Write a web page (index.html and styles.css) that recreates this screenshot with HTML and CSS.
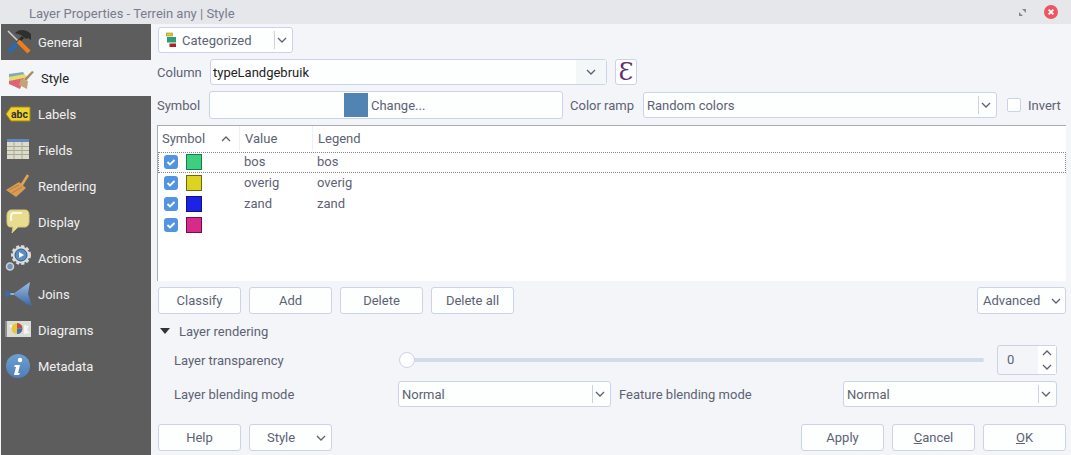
FILE: index.html
```html
<!DOCTYPE html>
<html>
<head>
    <title>Layer Properties - Terrein any | Style</title>
    <link rel="stylesheet" href="styles.css">
</head>
<body>
<div class="window">
    <div class="titlebar">
        <span class="title">Layer Properties - Terrein any | Style</span>
        <svg class="restore" width="7" height="7" viewBox="0 0 7 7"><path d="M3 0h4v4zM0 3l4 4H0z" fill="#8a8a8a"/></svg>
        <svg class="close" width="14" height="14" viewBox="0 0 14 14"><circle cx="7" cy="7" r="7" fill="#ee5560"/><path d="M4.600 4.600l4.800 4.800M9.400 4.600L4.600 9.400" stroke="#fff" stroke-width="1.800"/></svg>
    </div>
    <div class="content">
        <div class="sidebar">
            <div class="navitem">
                <svg class="navicon" width="26" height="26" viewBox="0 0 26 26"><path d="M2 2l11 11" stroke="#cfcfcf" stroke-width="1.600"/><path d="M17 8l-6 6" stroke="#2b2b2b" stroke-width="3"/><path d="M9 4c4-4 11-4 16 1v6l-3-2-2 1-5-4c-2-1-4-1-6-2z" fill="#2f2f2f"/><path d="M3 23l8-9" stroke="#2a6bb0" stroke-width="4.400"/><path d="M12 12l11 11" stroke="#f07c1c" stroke-width="4.400"/></svg>
                General
            </div>
            <div class="navitem active">
                <svg class="navicon" width="26" height="26" viewBox="0 0 26 26"><path d="M0 9l14-2 3 5-17 3z" fill="#7fa8c8"/><path d="M0 12l16-3 1 6-17 3z" fill="#e6dd66"/><path d="M0 16l15-3-4 11-11-5z" fill="#dc6476"/><path d="M17 16l8-9-2-1-8 8z" fill="#a58a5e"/><path d="M12 14l7 2-1 8-8-4z" fill="#c2a477"/></svg>
                Style
            </div>
            <div class="navitem">
                <svg class="navicon" width="26" height="26" viewBox="0 0 26 26"><path d="M5 6h19v14H5l-5-7z" fill="#f1d32e" stroke="#a68a12"/><text x="5" y="16.500" class="abc">abc</text></svg>
                Labels
            </div>
            <div class="navitem">
                <svg class="navicon" width="26" height="26" viewBox="0 0 26 26"><rect x="1" y="2" width="22" height="20" fill="#dcdccd"/><rect x="1" y="2" width="22" height="3" fill="#6488bb"/><path d="M1 9.500h22M1 13.500h22M1 17.500h22M8 5v17M16 5v17" stroke="#a9a994"/></svg>
                Fields
            </div>
            <div class="navitem">
                <svg class="navicon" width="26" height="26" viewBox="0 0 26 26"><path d="M15 13L22 2" stroke="#e3a54c" stroke-width="2.600"/><path d="M0 17l13-8 7 6-10 9z" fill="#d99c55"/><path d="M3 17l10-5M6 20l10-6" stroke="#b9803c"/></svg>
                Rendering
            </div>
            <div class="navitem">
                <svg class="navicon" width="26" height="26" viewBox="0 0 26 26"><path d="M5 1h14c3 0 4 2 4 5v7c0 3-2 5-4 5h-7l-6 6 1-6H5c-3 0-4-2-4-5V6c0-3 2-5 4-5z" fill="#e8dc8e" stroke="#d6c878"/><path d="M5 12V7c0-2 1-3 3-3h8" stroke="#fbf8e2" stroke-width="2" fill="none"/></svg>
                Display
            </div>
            <div class="navitem">
                <svg class="navicon" width="26" height="26" viewBox="0 0 26 26"><circle cx="15" cy="10" r="8.500" fill="#dcdcdc" stroke="#dcdcdc" stroke-width="3" stroke-dasharray="3 2"/><circle cx="15" cy="10" r="6" fill="#5c8cc4" stroke="#2f5a90"/><path d="M13 7l5 3-5 3z" fill="#fff"/><circle cx="4" cy="21.500" r="3.500" fill="#6f93bf" stroke="#cfcfcf" stroke-width="1.600"/></svg>
                Actions
            </div>
            <div class="navitem">
                <svg class="navicon" width="26" height="26" viewBox="0 0 26 26"><defs><linearGradient id="joinfill" x1="0" y1="0" x2="0" y2="1"><stop offset="0" stop-color="#9dbde2"/><stop offset="1" stop-color="#3a68a6"/></linearGradient></defs><path d="M7 13L24 1l-2 12 4 12-4-1z" fill="url(#joinfill)"/><path d="M2 13h6" stroke="#8fb0d6" stroke-width="2"/><circle cx="1.500" cy="13" r="3" fill="#3f69a0"/></svg>
                Joins
            </div>
            <div class="navitem">
                <svg class="navicon" width="26" height="26" viewBox="0 0 26 26"><rect x="0" y="4" width="25" height="16" fill="#dcdcd6"/><path d="M0 4v16" stroke="#8f8f8f" stroke-width="2"/><path d="M18 8l5 1-2 4 3 3-6 1zM3 8l4 0-2 4z" fill="#f4f4f2"/><circle cx="11" cy="11.500" r="5.500" fill="#e6c93a"/><path d="M11 11.500V6a5.500 5.500 0 0 1 5.500 5.500z" fill="#c74d4d"/><path d="M11 11.500h5.500A5.500 5.500 0 0 1 11 17z" fill="#3f6fb0"/></svg>
                Diagrams
            </div>
            <div class="navitem">
                <svg class="navicon" width="26" height="26" viewBox="0 0 26 26"><defs><linearGradient id="infofill" x1="0" y1="0" x2="0" y2="1"><stop offset="0" stop-color="#6f9ed2"/><stop offset="1" stop-color="#4f7fb8"/></linearGradient></defs><circle cx="12" cy="13" r="12" fill="url(#infofill)"/><circle cx="14" cy="7" r="2.200" fill="#fff"/><path d="M9 12h5l-2 8h2l-1 2H8l2-8H8z" fill="#fff"/></svg>
                Metadata
            </div>
        </div>
        <div class="main">
            <div class="row renderer-row">
                <div class="combo renderer">
                    <svg width="16" height="16" viewBox="0 0 16 16"><rect x="0.500" y="1" width="6" height="3" fill="#e3c92e" stroke="#8a7a20" stroke-width="0.500"/><rect x="1" y="5" width="9" height="5.500" fill="#2e9e7a"/><rect x="3.500" y="11.500" width="6.500" height="3.500" fill="#b02020"/></svg>
                    <span class="combo-text">Categorized</span>
                    <span class="combo-arrow split"><svg class="chev" width="10" height="6" viewBox="0 0 10 6"><path d="M1 1l4 4 4-4"/></svg></span>
                </div>
            </div>
            <div class="row column-row">
                <label class="lbl-column">Column</label>
                <div class="combo column-combo">
                    <span class="combo-text dark">typeLandgebruik</span>
                    <span class="combo-arrow wide"><svg class="chev" width="10" height="6" viewBox="0 0 10 6"><path d="M1 1l4 4 4-4"/></svg></span>
                </div>
                <div class="btn epsilon">&#400;</div>
            </div>
            <div class="row symbol-row">
                <label class="lbl-column">Symbol</label>
                <div class="symbol-btn"><span class="swatch-big"></span><span>Change...</span></div>
                <label class="lbl-ramp">Color ramp</label>
                <div class="combo ramp">
                    <span class="combo-text">Random colors</span>
                    <span class="combo-arrow split"><svg class="chev" width="10" height="6" viewBox="0 0 10 6"><path d="M1 1l4 4 4-4"/></svg></span>
                </div>
                <span class="checkbox"></span>
                <span class="invert">Invert</span>
            </div>
            <div class="tree">
                <div class="tree-head">
                    <span class="col-symbol">Symbol <svg class="chev sort" width="10" height="6" viewBox="0 0 10 6"><path d="M1 5l4-4 4 4"/></svg></span>
                    <span class="col-value">Value</span>
                    <span class="col-legend">Legend</span>
                </div>
                <div class="tree-row current">
                    <span class="check"><svg width="14" height="14" viewBox="0 0 14 14"><path d="M3.500 7l2.500 2.500 4.500-4.500"/></svg></span>
                    <span class="sw green"></span>
                    <span class="cell-value">bos</span><span class="cell-legend">bos</span>
                </div>
                <div class="tree-row">
                    <span class="check"><svg width="14" height="14" viewBox="0 0 14 14"><path d="M3.500 7l2.500 2.500 4.500-4.500"/></svg></span>
                    <span class="sw yellow"></span>
                    <span class="cell-value">overig</span><span class="cell-legend">overig</span>
                </div>
                <div class="tree-row">
                    <span class="check"><svg width="14" height="14" viewBox="0 0 14 14"><path d="M3.500 7l2.500 2.500 4.500-4.500"/></svg></span>
                    <span class="sw blue"></span>
                    <span class="cell-value">zand</span><span class="cell-legend">zand</span>
                </div>
                <div class="tree-row">
                    <span class="check"><svg width="14" height="14" viewBox="0 0 14 14"><path d="M3.500 7l2.500 2.500 4.500-4.500"/></svg></span>
                    <span class="sw pink"></span>
                </div>
            </div>
            <div class="row actions-row">
                <div class="btn">Classify</div>
                <div class="btn">Add</div>
                <div class="btn">Delete</div>
                <div class="btn">Delete all</div>
                <div class="btn advanced">Advanced <svg class="chev" width="10" height="6" viewBox="0 0 10 6"><path d="M1 1l4 4 4-4"/></svg></div>
            </div>
            <div class="section-head"><span class="tri"></span>Layer rendering</div>
            <div class="row transparency-row">
                <label class="lbl-render">Layer transparency</label>
                <div class="slider"><span class="slider-handle"></span></div>
                <div class="spin">
                    <span class="spin-value">0</span>
                    <span class="spin-arrows">
                        <svg class="chev" width="10" height="6" viewBox="0 0 10 6"><path d="M1 5l4-4 4 4"/></svg>
                        <svg class="chev" width="10" height="6" viewBox="0 0 10 6"><path d="M1 1l4 4 4-4"/></svg>
                    </span>
                </div>
            </div>
            <div class="row blending-row">
                <label class="lbl-render">Layer blending mode</label>
                <div class="combo blend-layer">
                    <span class="combo-text">Normal</span>
                    <span class="combo-arrow split"><svg class="chev" width="10" height="6" viewBox="0 0 10 6"><path d="M1 1l4 4 4-4"/></svg></span>
                </div>
                <label class="lbl-feature">Feature blending mode</label>
                <div class="combo blend-feature">
                    <span class="combo-text">Normal</span>
                    <span class="combo-arrow split"><svg class="chev" width="10" height="6" viewBox="0 0 10 6"><path d="M1 1l4 4 4-4"/></svg></span>
                </div>
            </div>
            <div class="row bottom-row">
                <div class="btn">Help</div>
                <div class="btn style-btn">Style <svg class="chev" width="10" height="6" viewBox="0 0 10 6"><path d="M1 1l4 4 4-4"/></svg></div>
                <div class="btn push">Apply</div>
                <div class="btn"><span><u>C</u>ancel</span></div>
                <div class="btn"><span><u>O</u>K</span></div>
            </div>
        </div>
    </div>
</div>
</body>
</html>
```
FILE: styles.css
```css
html, body {
    margin: 0;
    padding: 0;
}

body {
    font-family: Roboto, "Liberation Sans", sans-serif;
    font-size: 13px;
    color: #5c6274;
    background-color: #f4f5f8;
}

.window {
    width: 1071px;
    height: 455px;
    overflow: hidden;
    display: flex;
    flex-direction: column;
}

.titlebar {
    height: 24px;
    flex: none;
    background-color: #e6e7eb;
    display: flex;
    align-items: center;
    padding-left: 29px;
    color: #777c8e;
}

.title {
    flex: 1;
    padding-top: 2px;
}

.restore {
    margin-right: 18px;
}

.close {
    margin-right: 13px;
}

.content {
    flex: 1;
    display: flex;
}

.sidebar {
    width: 150px;
    margin-left: 1px;
    background-color: #5d5d5d;
    color: #f0f0f0;
}

.navitem {
    height: 36px;
    display: flex;
    align-items: center;
    padding-left: 5px;
}

.navicon {
    margin-right: 6px;
    flex: none;
    overflow: visible;
}

.navitem.active {
    background-color: #f4f5f8;
    color: #222222;
}

.navitem.active .navicon {
    margin-left: 3px;
}

.abc {
    font-size: 10.500px;
    font-weight: 700;
    fill: #333333;
}

.main {
    flex: 1;
    min-width: 0;
    padding: 3px 5px 0 6px;
}

.row {
    display: flex;
    align-items: center;
}

.chev {
    fill: none;
    stroke: #5c6274;
    stroke-width: 1.300;
}

.combo,
.btn,
.symbol-btn,
.spin {
    box-sizing: border-box;
    background-color: #fdfefe;
    border: 1px solid #cbd3e6;
    border-radius: 3px;
}

.combo {
    display: flex;
    align-items: center;
    height: 26px;
    padding-left: 3px;
}

.combo-text {
    flex: 1;
}

.combo-text.dark {
    color: #222222;
}

.combo-arrow {
    width: 18px;
    height: 18px;
    display: flex;
    align-items: center;
    justify-content: center;
    box-sizing: border-box;
}

.combo-arrow.split {
    border-left: 1px solid #cbd3e6;
    padding-right: 4px;
}

.combo-arrow.wide {
    width: 30px;
    height: 24px;
    background-color: #f4f7f7;
}

.renderer {
    width: 135px;
    margin-left: 1px;
    padding-left: 7px;
}

.column-row {
    margin-top: 6px;
}

.lbl-column {
    width: 52px;
    flex: none;
}

.column-combo {
    width: 397px;
    margin-left: 1px;
    padding-left: 2px;
}

.btn.epsilon {
    width: 22px;
    height: 26px;
    margin-left: 8px;
    font-family: "DejaVu Serif", serif;
    font-size: 24px;
    color: #5f2f70;
}

.symbol-row {
    margin-top: 6px;
    height: 28px;
}

.symbol-btn {
    width: 354px;
    height: 28px;
    display: flex;
    align-items: center;
    padding-left: 134px;
    gap: 3px;
}

.swatch-big {
    width: 24px;
    height: 24px;
    background-color: #5183b3;
}

.lbl-ramp {
    margin-left: 7px;
    width: 73px;
    flex: none;
}

.ramp {
    width: 354px;
}

.checkbox {
    box-sizing: border-box;
    width: 14px;
    height: 14px;
    margin-left: 10px;
    border: 1px solid #cbd3e6;
    border-radius: 2px;
    background-color: #ffffff;
}

.invert {
    margin-left: 7px;
}

.tree {
    box-sizing: border-box;
    width: 909px;
    height: 156px;
    margin-top: 6px;
    background-color: #ffffff;
    border-top: 1px solid #a9abb2;
    border-left: 1px solid #a9abb2;
}

.tree-head {
    height: 25px;
    margin-bottom: 1px;
    display: flex;
    align-items: center;
}

.col-symbol {
    width: 82px;
    padding-left: 4px;
    box-sizing: border-box;
    border-right: 1px solid #eef0f4;
    line-height: 25px;
    display: flex;
    align-items: center;
    justify-content: space-between;
    padding-right: 8px;
}

.col-value {
    width: 73px;
    box-sizing: border-box;
    padding-left: 5px;
    border-right: 1px solid #eef0f4;
    line-height: 25px;
}

.col-legend {
    padding-left: 5px;
}

.tree-row {
    height: 21px;
    box-sizing: border-box;
    display: flex;
    align-items: center;
    padding-left: 6px;
    padding-bottom: 1px;
}

.tree-row.current {
    border: 1px dotted #888888;
    padding-left: 5px;
    padding-bottom: 1px;
}

.check {
    width: 14px;
    height: 14px;
    background-color: #5294e2;
    border-radius: 3px;
    display: flex;
}

.check path {
    fill: none;
    stroke: #ffffff;
    stroke-width: 1.800;
}

.sw {
    box-sizing: border-box;
    width: 16px;
    height: 16px;
    margin-left: 8px;
    border: 1px solid;
}

.green {
    background-color: #3dcf80;
    border-color: #1f7a4a;
}

.yellow {
    background-color: #ddd321;
    border-color: #6d6810;
}

.blue {
    background-color: #1c22e6;
    border-color: #101478;
}

.pink {
    background-color: #d82a8a;
    border-color: #701045;
}

.cell-value {
    margin-left: 42px;
    width: 73px;
    padding-bottom: 2px;
}

.cell-legend {
    display: block;
    padding-bottom: 2px;
}

.actions-row {
    margin-top: 6px;
    gap: 8px;
    margin-left: 1px;
}

.btn {
    width: 83px;
    height: 27px;
    display: flex;
    align-items: center;
    justify-content: center;
    flex: none;
}

.btn.advanced {
    width: 89px;
    margin-left: auto;
    justify-content: space-between;
    padding: 0 4px 0 5px;
}

.section-head {
    display: flex;
    align-items: center;
    margin-top: 9px;
    margin-left: 3px;
    height: 16px;
}

.tri {
    width: 0;
    height: 0;
    border-left: 5.500px solid transparent;
    border-right: 5.500px solid transparent;
    border-top: 6px solid #333333;
    margin-right: 9px;
}

.transparency-row {
    margin-top: 6px;
    height: 30px;
    width: 900px;
}

.lbl-render {
    width: 241px;
    padding-left: 17px;
    box-sizing: border-box;
    flex: none;
}

.slider {
    position: relative;
    width: 585px;
    height: 4px;
    margin-left: 1px;
    background-color: #d3dbeb;
    border-radius: 2px;
}

.slider-handle {
    position: absolute;
    left: 0;
    top: -6px;
    box-sizing: border-box;
    width: 16px;
    height: 16px;
    border-radius: 50%;
    background-color: #ffffff;
    border: 1px solid #cbd3e6;
}

.spin {
    width: 60px;
    height: 30px;
    margin-left: 13px;
    display: flex;
    flex: none;
    background-color: #f4f5f8;
}

.spin-value {
    flex: 1;
    padding-left: 9px;
    line-height: 28px;
}

.spin-arrows {
    width: 18px;
    display: flex;
    flex-direction: column;
    align-items: center;
    justify-content: space-around;
    background-color: #ffffff;
}

.blending-row {
    margin-top: 6px;
}

.blend-layer {
    width: 213px;
}

.lbl-feature {
    width: 232px;
    box-sizing: border-box;
    padding-left: 8px;
    flex: none;
}

.blend-feature {
    width: 214px;
}

.bottom-row {
    margin-top: 17px;
    margin-left: 1px;
    gap: 8px;
}

.btn.style-btn {
    justify-content: space-between;
    padding: 0 5px 0 17px;
}

.btn.push {
    margin-left: auto;
}
```
